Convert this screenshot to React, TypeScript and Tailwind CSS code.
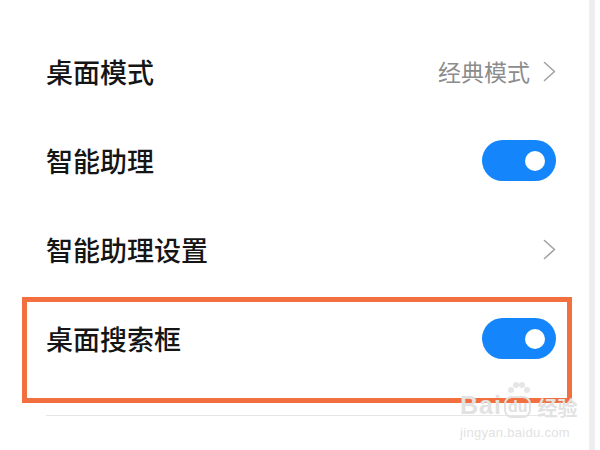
import React from "react";

const ROWS = [
  { label: "桌面模式", kind: "value", value: "经典模式" },
  { label: "智能助理", kind: "toggle" },
  { label: "智能助理设置", kind: "link" },
  { label: "桌面搜索框", kind: "toggle" },
];

function Chevron() {
  return (
    <svg width="13" height="21" viewBox="0 0 13 21" fill="none">
      <polyline points="1.5,1.5 11.5,10.5 1.5,19.5" stroke="#a3a3a3" strokeWidth="1.6" strokeLinecap="round" strokeLinejoin="round" />
    </svg>
  );
}

function Toggle() {
  return (
    <div className="w-[74px] h-[41px] rounded-full bg-[#1485fb] flex items-center justify-end pr-[11px]">
      <div className="w-[20px] h-[20px] rounded-full bg-white" />
    </div>
  );
}

function Watermark() {
  return (
    <div className="absolute left-[460px] top-[384px] flex flex-col items-start pointer-events-none text-[#e2e2e2] font-['Liberation_Sans','Noto_Sans_CJK_SC',sans-serif]">
      <div className="flex items-end h-[34px]">
        <span className="text-[25px] leading-none font-bold tracking-[1px]">Bai</span>
        <div className="relative mx-[2px]">
          <svg width="26" height="16" viewBox="0 0 26 16" className="absolute -top-[15px] left-[1px]">
            <circle cx="6" cy="9" r="3" fill="#e6e6e6" />
            <circle cx="11" cy="4" r="3" fill="#e6e6e6" />
            <circle cx="17" cy="4" r="3" fill="#e6e6e6" />
            <circle cx="22" cy="9" r="3" fill="#e6e6e6" />
          </svg>
          <div className="rounded-[8px] border-2 border-[#e2e2e2] px-[2px] h-[22px] flex items-center text-[16px] font-bold leading-none">
            du
          </div>
        </div>
        <span className="text-[20px] leading-none ml-[4px] font-['Noto_Sans_CJK_SC',sans-serif] font-bold">经验</span>
      </div>
      <div className="text-[13px] leading-none mt-[8px] tracking-[0.3px]">jingyan.baidu.com</div>
    </div>
  );
}

export default function App() {
  return (
    <div className="w-[600px] h-[450px] bg-white flex overflow-hidden font-['Noto_Sans_CJK_SC',sans-serif]">
      <div className="w-[589px] relative pt-[27px]">
        {ROWS.map((row) => (
          <div key={row.label} className="flex items-center justify-between h-[89px] pl-[46px] pr-[33px]">
            <span className="text-[27px] leading-none text-[#151515] font-medium">{row.label}</span>
            {row.kind === "toggle" && <Toggle />}
            {row.kind === "link" && <Chevron />}
            {row.kind === "value" && (
              <div className="flex items-center gap-[13px]">
                <span className="text-[23px] leading-none text-[#8c8c8c]">{row.value}</span>
                <Chevron />
              </div>
            )}
          </div>
        ))}
        <div className="mt-[32px] h-px bg-[#e6e6e6] ml-[46px] mr-[34px]" />

        {/* annotation box */}
        <div className="absolute left-[22px] top-[297px] w-[550px] h-[106px] border-[5px] border-[#f2703f]" />
        <Watermark />
      </div>
      <div className="w-[6px] bg-[#eeeeee]" />
      <div className="flex-1 bg-white" />
    </div>
  );
}
